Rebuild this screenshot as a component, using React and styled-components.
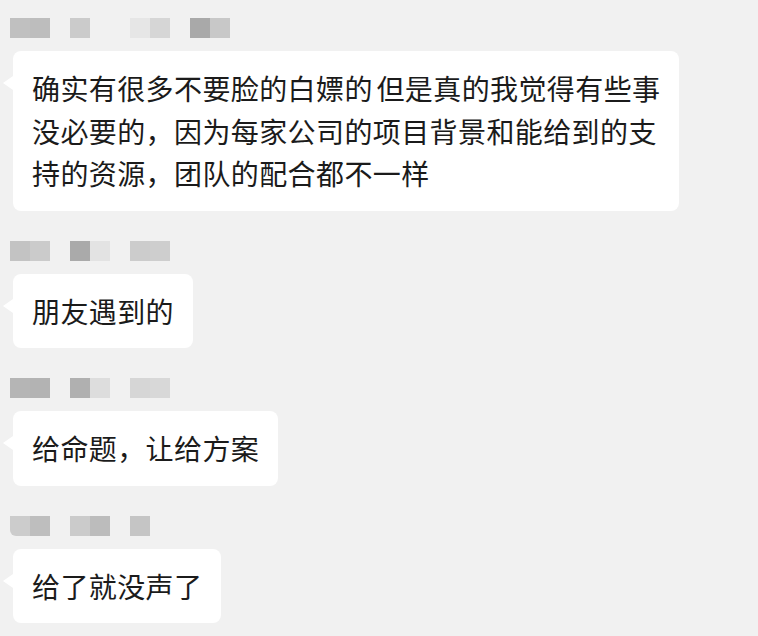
import styled, { createGlobalStyle } from "styled-components";

const GlobalStyle = createGlobalStyle`
	html, body {
		margin: 0;
		padding: 0;
		background-color: #f1f1f1;
	}
	body {
		font-family: "Noto Sans CJK SC", "Noto Sans", sans-serif;
	}
`;

const Page = styled.div`
	width: 758px;
	height: 636px;
	overflow: hidden;
	padding-top: 18px;
	box-sizing: border-box;
	display: flex;
	flex-direction: column;
	gap: 30px;
`;

const Message = styled.div`
	display: flex;
	flex-direction: column;
	align-items: flex-start;
	gap: 13px;
`;

// blurred sender name, drawn as a row of mosaic cells
const NameRow = styled.div`
	display: flex;
	margin-left: 10px;
	height: 20px;
`;

const Cell = styled.div`
	width: 20px;
	height: 20px;
	background-color: ${props => props.$color || "transparent"};
	border-bottom-left-radius: ${props => (props.$round ? "6px" : "0")};
`;

const Bubble = styled.div`
	position: relative;
	margin-left: 13px;
	padding: 16px 19px;
	background-color: #ffffff;
	border-radius: 8px;
	color: #1b1b1b;
	font-size: 28px;
	letter-spacing: 0.4px;
	word-spacing: -3px;
	line-height: 42.5px;
	white-space: nowrap;

	&::before {
		content: "";
		position: absolute;
		left: -10px;
		top: 25px;
		border-top: 7px solid transparent;
		border-bottom: 7px solid transparent;
		border-right: 10px solid #ffffff;
	}
`;

const messages = [
	{
		name: ["#c0c0c0", "#bdbdbd", null, "#cbcbcb", null, null, "#e6e6e6", "#d6d6d6", null, "#a9a9a9", "#c8c8c8"],
		lines: [
			"确实有很多不要脸的白嫖的 但是真的我觉得有些事",
			"没必要的，因为每家公司的项目背景和能给到的支",
			"持的资源，团队的配合都不一样",
		],
	},
	{
		name: ["#c3c3c3", "#cbcbcb", null, "#aaaaaa", "#e3e3e3", null, "#cccccc", "#cecece"],
		lines: ["朋友遇到的"],
	},
	{
		name: ["#b5b5b5", "#b3b3b3", null, "#b0b0b0", "#dddddd", null, "#d6d6d6", "#d8d8d8"],
		lines: ["给命题，让给方案"],
	},
	{
		name: ["#cccccc", "#bebebe", null, "#cbcbcb", "#bcbcbc", null, "#c5c5c5"],
		round: true,
		lines: ["给了就没声了"],
	},
];

function App() {
	return (
		<>
			<GlobalStyle />
			<Page>
				{messages.map((msg, i) => (
					<Message key={i}>
						<NameRow>
							{msg.name.map((c, j) => (
								<Cell key={j} $color={c} $round={msg.round && j === 0} />
							))}
						</NameRow>
						<Bubble>
							{msg.lines.map((line, k) => (
								<div key={k}>{line}</div>
							))}
						</Bubble>
					</Message>
				))}
			</Page>
		</>
	);
}

export default App;
